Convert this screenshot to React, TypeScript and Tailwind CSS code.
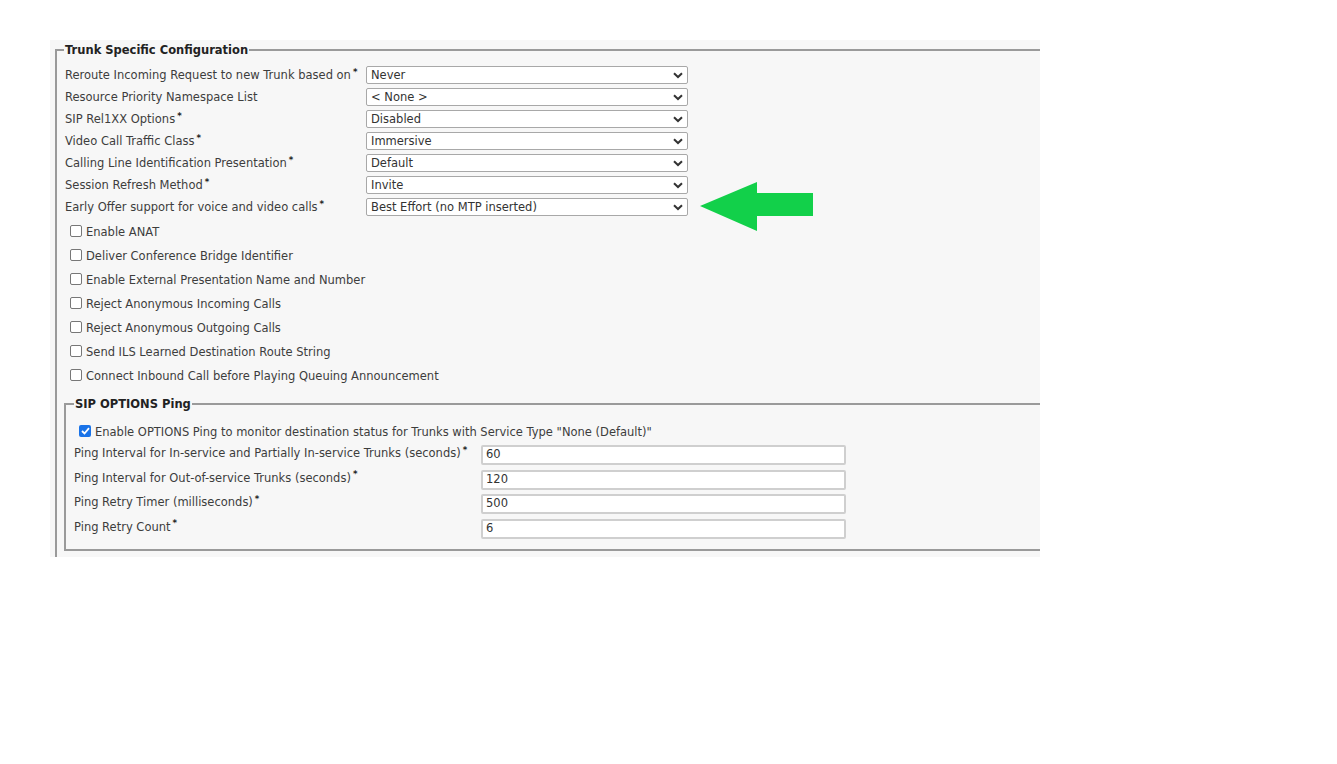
import React from "react";

type SelectRow = { label: string; required: boolean; value: string };

const selectRows: SelectRow[] = [
  { label: "Reroute Incoming Request to new Trunk based on", required: true, value: "Never" },
  { label: "Resource Priority Namespace List", required: false, value: "< None >" },
  { label: "SIP Rel1XX Options", required: true, value: "Disabled" },
  { label: "Video Call Traffic Class", required: true, value: "Immersive" },
  { label: "Calling Line Identification Presentation", required: true, value: "Default" },
  { label: "Session Refresh Method", required: true, value: "Invite" },
  { label: "Early Offer support for voice and video calls", required: true, value: "Best Effort (no MTP inserted)" },
];

const checkRows = [
  "Enable ANAT",
  "Deliver Conference Bridge Identifier",
  "Enable External Presentation Name and Number",
  "Reject Anonymous Incoming Calls",
  "Reject Anonymous Outgoing Calls",
  "Send ILS Learned Destination Route String",
  "Connect Inbound Call before Playing Queuing Announcement",
];

const pingRows = [
  { label: "Ping Interval for In-service and Partially In-service Trunks (seconds)", value: "60" },
  { label: "Ping Interval for Out-of-service Trunks (seconds)", value: "120" },
  { label: "Ping Retry Timer (milliseconds)", value: "500" },
  { label: "Ping Retry Count", value: "6" },
];

function Req() {
  return <sup className="ml-[2px] font-bold text-[#222]">*</sup>;
}

function Chevron() {
  return (
    <svg width="10" height="7" viewBox="0 0 10 7" className="shrink-0">
      <path d="M1 1.2 L5 5 L9 1.2" fill="none" stroke="#333" strokeWidth="2" />
    </svg>
  );
}

function Box({ checked = false }: { checked?: boolean }) {
  return checked ? (
    <span className="flex h-[12px] w-[12px] shrink-0 items-center justify-center rounded-[2px] bg-[#1a73e8]">
      <svg width="9" height="8" viewBox="0 0 9 8">
        <path d="M1 4 L3.5 6.5 L8 1.2" fill="none" stroke="#fff" strokeWidth="1.8" />
      </svg>
    </span>
  ) : (
    <span className="block h-[12px] w-[12px] shrink-0 rounded-[2px] border border-[#777] bg-white" />
  );
}

function LeftArrow() {
  return (
    <svg width="114" height="50" viewBox="0 0 114 50" className="my-[-16px] ml-[12px] shrink-0">
      <polygon points="0,24 57,0 57,11 113,11 113,34 57,34 57,49" fill="#12d04a" />
    </svg>
  );
}

export default function App() {
  return (
    <div className="min-h-[764px] bg-white pl-[50px] pt-[40px] font-['DejaVu_Sans',Verdana,sans-serif] text-[11.5px] text-[#3d3d3d]">
      <div className="h-[517px] w-[990px] overflow-hidden bg-[#f7f7f7] pt-[3px]">
        <fieldset className="ml-[5px] w-[1100px] border-0 border-l-2 border-t-2 border-[#9a9a9a] pb-[40px] pl-[7px]">
          <legend className="px-[1px] text-[11.5px] font-bold leading-[14px] text-[#222]">
            Trunk Specific Configuration
          </legend>

          <div className="ml-[1px] mt-[9px] flex flex-col gap-[4px]">
            {selectRows.map((r, i) => (
              <div key={r.label} className="flex h-[18px] items-center">
                <div className="w-[301px] leading-[14px]">
                  {r.label}
                  {r.required && <Req />}
                </div>
                <div className="flex h-[18px] w-[322px] items-center justify-between rounded-[2px] border border-[#a8a8a8] bg-white pl-[4px] pr-[4px]">
                  <span className="leading-[14px] text-[#333]">{r.value}</span>
                  <Chevron />
                </div>
                {i === 6 && <LeftArrow />}
              </div>
            ))}
          </div>

          <div className="ml-[6px] mt-[4px] flex flex-col">
            {checkRows.map((c) => (
              <div key={c} className="flex h-[24px] items-center gap-[4px]">
                <span className="mt-[-3px]">
                  <Box />
                </span>
                <span className="leading-[14px]">{c}</span>
              </div>
            ))}
          </div>

          <fieldset className="mt-[9px] w-[1100px] border-2 border-[#9a9a9a] pb-[10px] pl-[8px]">
            <legend className="px-[1px] text-[11.5px] font-bold leading-[14px] text-[#222]">
              SIP OPTIONS Ping
            </legend>
            <div className="ml-[5px] mt-[14px] flex items-center gap-[4px]">
              <span className="mt-[-3px]">
                <Box checked />
              </span>
              <span className="leading-[14px]">
                Enable OPTIONS Ping to monitor destination status for Trunks with Service Type "None (Default)"
              </span>
            </div>
            <div className="mt-[6px] flex flex-col gap-[4.5px]">
              {pingRows.map((p) => (
                <div key={p.label} className="flex items-start">
                  <div className="w-[407px] pt-[1px] leading-[14px]">
                    {p.label}
                    <Req />
                  </div>
                  <div className="flex h-[20px] w-[365px] items-center rounded-[2px] border-2 border-[#cfcfcf] bg-white pl-[3px] text-[#333]">
                    {p.value}
                  </div>
                </div>
              ))}
            </div>
          </fieldset>
        </fieldset>
      </div>
    </div>
  );
}
